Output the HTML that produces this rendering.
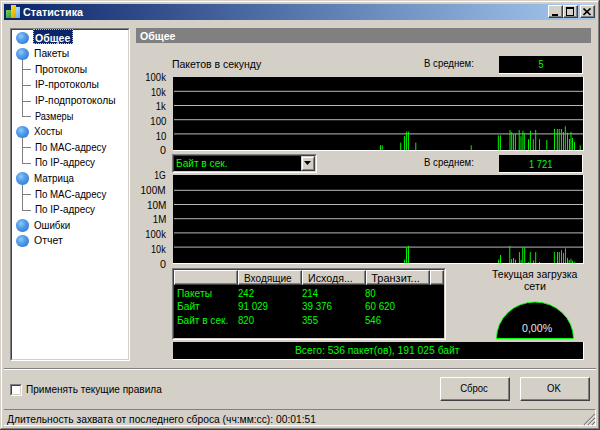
<!DOCTYPE html>
<html><head><meta charset="utf-8"><style>
html,body{margin:0;padding:0;width:600px;height:430px;overflow:hidden;background:#d4d0c8;}
body{position:relative;font-family:"Liberation Sans",sans-serif;font-size:11px;}
div{position:absolute;box-sizing:border-box;}
.t{line-height:12px;white-space:nowrap;}
svg{position:absolute;}
</style></head><body>
<div style="left:1px;top:1px;width:598px;height:1px;background:#fff"></div>
<div style="left:1px;top:1px;width:1px;height:428px;background:#fff"></div>
<div style="left:1px;top:428px;width:598px;height:1px;background:#808080"></div>
<div style="left:598px;top:1px;width:1px;height:428px;background:#808080"></div>
<div style="left:0px;top:429px;width:600px;height:1px;background:#404040"></div>
<div style="left:599px;top:0px;width:1px;height:430px;background:#404040"></div>
<div style="left:4px;top:4px;width:592px;height:16px;background:linear-gradient(to right,#0a246a,#a6caf0)"></div>
<div style="left:6px;top:10px;width:5px;height:8px;background:linear-gradient(135deg,#74d060,#3a9a30)"></div>
<div style="left:11px;top:5.2px;width:5px;height:12.8px;background:linear-gradient(135deg,#ffe020,#e0a000)"></div>
<div style="left:16px;top:7.2px;width:4px;height:10.8px;background:linear-gradient(135deg,#b0e0ff,#60a8e8)"></div>
<div class="t" style="top:5.80px;color:#fff;font-weight:bold;left:22.80px;"><span style="display:inline-block;transform:scale(0.9756,1.000);transform-origin:left 10px;">Статистика</span></div>
<div style="left:548px;top:5px;width:15px;height:13px;background:#d4d0c8;border-top:1px solid #fff;border-left:1px solid #fff;border-right:1px solid #404040;border-bottom:1px solid #404040"></div>
<div style="left:549px;top:6px;width:13px;height:11px;border-right:1px solid #808080;border-bottom:1px solid #808080"></div>
<div style="left:563px;top:5px;width:15px;height:13px;background:#d4d0c8;border-top:1px solid #fff;border-left:1px solid #fff;border-right:1px solid #404040;border-bottom:1px solid #404040"></div>
<div style="left:564px;top:6px;width:13px;height:11px;border-right:1px solid #808080;border-bottom:1px solid #808080"></div>
<div style="left:580px;top:5px;width:15px;height:13px;background:#d4d0c8;border-top:1px solid #fff;border-left:1px solid #fff;border-right:1px solid #404040;border-bottom:1px solid #404040"></div>
<div style="left:581px;top:6px;width:13px;height:11px;border-right:1px solid #808080;border-bottom:1px solid #808080"></div>
<div style="left:552px;top:14px;width:6px;height:2px;background:#000"></div>
<div style="left:566px;top:7px;width:8px;height:9px;border:1px solid #000;border-top-width:2px"></div>
<svg style="left:583px;top:8px" width="9" height="8" viewBox="0 0 9 8"><path d="M0.5 0.5L7.5 7M7.5 0.5L0.5 7" stroke="#000" stroke-width="1.6" fill="none"/></svg>
<div style="left:10px;top:28px;width:120px;height:333px;background:#fff;border-top:1px solid #808080;border-left:1px solid #808080;border-right:1px solid #fff;border-bottom:1px solid #fff"></div>
<div style="left:11px;top:29px;width:118px;height:331px;border-top:1px solid #404040;border-left:1px solid #404040;border-right:1px solid #d4d0c8;border-bottom:1px solid #d4d0c8"></div>
<div style="left:22px;top:60px;width:1px;height:57px;background:#808080"></div>
<div style="left:22px;top:69px;width:9px;height:1px;background:#808080"></div>
<div style="left:22px;top:85px;width:9px;height:1px;background:#808080"></div>
<div style="left:22px;top:101px;width:9px;height:1px;background:#808080"></div>
<div style="left:22px;top:116px;width:9px;height:1px;background:#808080"></div>
<div style="left:22px;top:138px;width:1px;height:26px;background:#808080"></div>
<div style="left:22px;top:147px;width:9px;height:1px;background:#808080"></div>
<div style="left:22px;top:163px;width:9px;height:1px;background:#808080"></div>
<div style="left:22px;top:185px;width:1px;height:26px;background:#808080"></div>
<div style="left:22px;top:194px;width:9px;height:1px;background:#808080"></div>
<div style="left:22px;top:210px;width:9px;height:1px;background:#808080"></div>
<div style="left:16.3px;top:32.00px;width:12.6px;height:12.4px;border-radius:50%;background:radial-gradient(circle at 38% 35%,#8ccaff 0%,#55a0ea 35%,#3c84d8 70%,#2a66bc 100%)"></div>
<div style="left:33px;top:29px;width:40px;height:15px;background:#0a246a;outline:1px dotted #d4c080;outline-offset:-1px"></div>
<div class="t" style="top:31.50px;color:#fff;font-weight:bold;left:34.70px;"><span style="display:inline-block;transform:scale(0.9573,1.000);transform-origin:left 10px;">Общее</span></div>
<div style="left:16.3px;top:47.60px;width:12.6px;height:12.4px;border-radius:50%;background:radial-gradient(circle at 38% 35%,#8ccaff 0%,#55a0ea 35%,#3c84d8 70%,#2a66bc 100%)"></div>
<div class="t" style="top:47.10px;color:#000;left:33.60px;"><span style="display:inline-block;transform:scale(0.9344,1.000);transform-origin:left 10px;">Пакеты</span></div>
<div class="t" style="top:62.70px;color:#000;left:34.80px;"><span style="display:inline-block;transform:scale(0.9308,1.000);transform-origin:left 10px;">Протоколы</span></div>
<div class="t" style="top:78.30px;color:#000;left:34.80px;"><span style="display:inline-block;transform:scale(0.9357,1.000);transform-origin:left 10px;">IP-протоколы</span></div>
<div class="t" style="top:93.90px;color:#000;left:34.80px;"><span style="display:inline-block;transform:scale(0.9313,1.000);transform-origin:left 10px;">IP-подпротоколы</span></div>
<div class="t" style="top:109.50px;color:#000;left:34.80px;"><span style="display:inline-block;transform:scale(0.8377,1.000);transform-origin:left 10px;">Размеры</span></div>
<div style="left:16.3px;top:125.60px;width:12.6px;height:12.4px;border-radius:50%;background:radial-gradient(circle at 38% 35%,#8ccaff 0%,#55a0ea 35%,#3c84d8 70%,#2a66bc 100%)"></div>
<div class="t" style="top:125.10px;color:#000;left:33.60px;"><span style="display:inline-block;transform:scale(0.8936,1.000);transform-origin:left 10px;">Хосты</span></div>
<div class="t" style="top:140.70px;color:#000;left:34.80px;"><span style="display:inline-block;transform:scale(0.8806,1.000);transform-origin:left 10px;">По MAC-адресу</span></div>
<div class="t" style="top:156.30px;color:#000;left:34.80px;"><span style="display:inline-block;transform:scale(0.8966,1.000);transform-origin:left 10px;">По IP-адресу</span></div>
<div style="left:16.3px;top:172.40px;width:12.6px;height:12.4px;border-radius:50%;background:radial-gradient(circle at 38% 35%,#8ccaff 0%,#55a0ea 35%,#3c84d8 70%,#2a66bc 100%)"></div>
<div class="t" style="top:171.90px;color:#000;left:33.60px;"><span style="display:inline-block;transform:scale(0.8911,1.000);transform-origin:left 10px;">Матрица</span></div>
<div class="t" style="top:187.50px;color:#000;left:34.80px;"><span style="display:inline-block;transform:scale(0.8806,1.000);transform-origin:left 10px;">По MAC-адресу</span></div>
<div class="t" style="top:203.10px;color:#000;left:34.80px;"><span style="display:inline-block;transform:scale(0.8966,1.000);transform-origin:left 10px;">По IP-адресу</span></div>
<div style="left:16.3px;top:219.20px;width:12.6px;height:12.4px;border-radius:50%;background:radial-gradient(circle at 38% 35%,#8ccaff 0%,#55a0ea 35%,#3c84d8 70%,#2a66bc 100%)"></div>
<div class="t" style="top:218.70px;color:#000;left:33.60px;"><span style="display:inline-block;transform:scale(0.8873,1.000);transform-origin:left 10px;">Ошибки</span></div>
<div style="left:16.3px;top:234.80px;width:12.6px;height:12.4px;border-radius:50%;background:radial-gradient(circle at 38% 35%,#8ccaff 0%,#55a0ea 35%,#3c84d8 70%,#2a66bc 100%)"></div>
<div class="t" style="top:234.30px;color:#000;left:33.60px;"><span style="display:inline-block;transform:scale(0.9560,1.000);transform-origin:left 10px;">Отчет</span></div>
<div style="left:136px;top:28px;width:455px;height:15px;background:#808080"></div>
<div class="t" style="top:29.50px;color:#fff;font-weight:bold;left:139.50px;"><span style="display:inline-block;transform:scale(0.9627,1.000);transform-origin:left 10px;">Общее</span></div>
<div class="t" style="top:57.60px;color:#000;left:172.40px;"><span style="display:inline-block;transform:scale(0.9531,1.000);transform-origin:left 10px;">Пакетов в секунду</span></div>
<div class="t" style="top:57.20px;color:#000;left:424.30px;"><span style="display:inline-block;transform:scale(0.8735,1.000);transform-origin:left 10px;">В среднем:</span></div>
<div style="left:499px;top:56px;width:84px;height:18px;background:#000;border-right:1px solid #fff;border-bottom:1px solid #fff"></div>
<div class="t" style="top:58.20px;color:#00ff00;left:240.75px;width:600px;text-align:center;"><span style="display:inline-block;transform:scale(0.8163,1.000);transform-origin:center 10px;">5</span></div>
<div style="left:173px;top:77px;width:411px;height:74px;background:#000;border-right:1px solid #fff;border-bottom:1px solid #fff"></div>
<svg style="left:0;top:0" width="600" height="430" viewBox="0 0 600 430"><rect x="174" y="90.80" width="409" height="1" fill="#b8b8b8"/><rect x="174" y="105.00" width="409" height="1" fill="#b8b8b8"/><rect x="174" y="119.20" width="409" height="1" fill="#b8b8b8"/><rect x="174" y="133.40" width="409" height="1" fill="#b8b8b8"/><rect x="380.03" y="145.30" width="0.94" height="4.70" fill="#00ff00"/><rect x="381.73" y="145.30" width="0.94" height="4.70" fill="#00ff00"/><rect x="400.23" y="142.60" width="0.94" height="7.40" fill="#00ff00"/><rect x="403.93" y="136.00" width="0.94" height="14.00" fill="#00ff00"/><rect x="405.93" y="131.60" width="0.94" height="18.40" fill="#00ff00"/><rect x="407.93" y="131.60" width="0.94" height="18.40" fill="#00ff00"/><rect x="415.33" y="142.60" width="0.94" height="7.40" fill="#00ff00"/><rect x="470.73" y="145.30" width="0.94" height="4.70" fill="#00ff00"/><rect x="497.83" y="135.40" width="0.94" height="14.60" fill="#00ff00"/><rect x="499.93" y="135.40" width="0.94" height="14.60" fill="#00ff00"/><rect x="509.53" y="130.00" width="0.94" height="20.00" fill="#00ff00"/><rect x="511.23" y="132.00" width="0.94" height="18.00" fill="#00ff00"/><rect x="513.03" y="134.20" width="0.94" height="15.80" fill="#00ff00"/><rect x="514.93" y="133.75" width="0.94" height="16.25" fill="#00ff00"/><rect x="518.73" y="130.00" width="0.94" height="20.00" fill="#00ff00"/><rect x="520.53" y="136.25" width="0.94" height="13.75" fill="#00ff00"/><rect x="522.43" y="130.80" width="0.94" height="19.20" fill="#00ff00"/><rect x="523.83" y="132.90" width="0.94" height="17.10" fill="#00ff00"/><rect x="528.03" y="139.20" width="0.94" height="10.80" fill="#00ff00"/><rect x="529.93" y="130.80" width="0.94" height="19.20" fill="#00ff00"/><rect x="532.83" y="139.20" width="0.94" height="10.80" fill="#00ff00"/><rect x="535.23" y="130.00" width="0.94" height="20.00" fill="#00ff00"/><rect x="539.03" y="139.20" width="0.94" height="10.80" fill="#00ff00"/><rect x="546.33" y="140.00" width="0.94" height="10.00" fill="#00ff00"/><rect x="554.03" y="129.00" width="0.94" height="21.00" fill="#00ff00"/><rect x="556.83" y="129.00" width="0.94" height="21.00" fill="#00ff00"/><rect x="558.73" y="129.00" width="0.94" height="21.00" fill="#00ff00"/><rect x="560.93" y="129.00" width="0.94" height="21.00" fill="#00ff00"/><rect x="563.03" y="132.00" width="0.94" height="18.00" fill="#00ff00"/><rect x="564.83" y="126.25" width="0.94" height="23.75" fill="#00ff00"/><rect x="567.03" y="132.70" width="0.94" height="17.30" fill="#00ff00"/><rect x="569.03" y="139.00" width="0.94" height="11.00" fill="#00ff00"/><rect x="570.53" y="131.70" width="0.94" height="18.30" fill="#00ff00"/><rect x="572.03" y="138.00" width="0.94" height="12.00" fill="#00ff00"/><rect x="574.03" y="142.00" width="0.94" height="8.00" fill="#00ff00"/><rect x="579.73" y="145.40" width="0.94" height="4.60" fill="#00ff00"/></svg>
<div class="t" style="top:71.00px;color:#000;left:-234.00px;width:400px;text-align:right;"><span style="display:inline-block;transform:scale(0.8592,1.000);transform-origin:right 10px;">100k</span></div>
<div class="t" style="top:85.60px;color:#000;left:-234.00px;width:400px;text-align:right;"><span style="display:inline-block;transform:scale(0.8282,1.000);transform-origin:right 10px;">10k</span></div>
<div class="t" style="top:99.80px;color:#000;left:-234.00px;width:400px;text-align:right;"><span style="display:inline-block;transform:scale(0.8602,1.000);transform-origin:right 10px;">1k</span></div>
<div class="t" style="top:114.90px;color:#000;left:-234.00px;width:400px;text-align:right;"><span style="display:inline-block;transform:scale(0.8715,1.000);transform-origin:right 10px;">100</span></div>
<div class="t" style="top:129.50px;color:#000;left:-234.00px;width:400px;text-align:right;"><span style="display:inline-block;transform:scale(0.8653,1.000);transform-origin:right 10px;">10</span></div>
<div class="t" style="top:144.20px;color:#000;left:-234.00px;width:400px;text-align:right;"><span style="display:inline-block;transform:scale(0.9796,1.000);transform-origin:right 10px;">0</span></div>
<div style="left:172px;top:154px;width:145px;height:19px;background:#000;border-top:1px solid #808080;border-left:1px solid #808080;border-right:1px solid #fff;border-bottom:1px solid #fff"></div>
<div style="left:173px;top:155px;width:143px;height:17px;border-top:1px solid #404040;border-left:1px solid #404040;border-right:1px solid #d4d0c8;border-bottom:1px solid #d4d0c8"></div>
<div style="left:301px;top:156px;width:14px;height:15px;background:#d4d0c8;border-top:1px solid #d4d0c8;border-left:1px solid #d4d0c8;border-right:1px solid #404040;border-bottom:1px solid #404040"></div>
<div style="left:302px;top:157px;width:12px;height:13px;border-top:1px solid #fff;border-left:1px solid #fff;border-right:1px solid #808080;border-bottom:1px solid #808080"></div>
<svg style="left:304px;top:161px" width="7" height="4" viewBox="0 0 7 4"><path d="M0 0H7L3.5 4Z" fill="#000"/></svg>
<div class="t" style="top:157.30px;color:#00ff00;left:175.60px;"><span style="display:inline-block;transform:scale(0.9202,1.000);transform-origin:left 10px;">Байт в сек.</span></div>
<div class="t" style="top:155.50px;color:#000;left:424.30px;"><span style="display:inline-block;transform:scale(0.8735,1.000);transform-origin:left 10px;">В среднем:</span></div>
<div style="left:499px;top:155px;width:84px;height:18px;background:#000;border-right:1px solid #fff;border-bottom:1px solid #fff"></div>
<div class="t" style="top:157.75px;color:#00ff00;left:240.40px;width:600px;text-align:center;"><span style="display:inline-block;transform:scale(0.8499,1.000);transform-origin:center 10px;">1 721</span></div>
<div style="left:173px;top:175px;width:411px;height:89px;background:#000;border-right:1px solid #fff;border-bottom:1px solid #fff"></div>
<svg style="left:0;top:0" width="600" height="430" viewBox="0 0 600 430"><rect x="174" y="189.80" width="409" height="1" fill="#b8b8b8"/><rect x="174" y="204.00" width="409" height="1" fill="#b8b8b8"/><rect x="174" y="218.20" width="409" height="1" fill="#b8b8b8"/><rect x="174" y="232.40" width="409" height="1" fill="#b8b8b8"/><rect x="174" y="246.60" width="409" height="1" fill="#b8b8b8"/><rect x="404.13" y="259.60" width="0.94" height="3.40" fill="#00ff00"/><rect x="406.03" y="247.10" width="0.94" height="15.90" fill="#00ff00"/><rect x="408.03" y="245.80" width="0.94" height="17.20" fill="#00ff00"/><rect x="498.13" y="259.60" width="0.94" height="3.40" fill="#00ff00"/><rect x="500.03" y="255.00" width="0.94" height="8.00" fill="#00ff00"/><rect x="509.33" y="245.80" width="0.94" height="17.20" fill="#00ff00"/><rect x="511.03" y="259.20" width="0.94" height="3.80" fill="#00ff00"/><rect x="513.13" y="257.90" width="0.94" height="5.10" fill="#00ff00"/><rect x="515.03" y="259.60" width="0.94" height="3.40" fill="#00ff00"/><rect x="518.93" y="252.10" width="0.94" height="10.90" fill="#00ff00"/><rect x="520.63" y="260.00" width="0.94" height="3.00" fill="#00ff00"/><rect x="522.28" y="247.10" width="0.94" height="15.90" fill="#00ff00"/><rect x="524.23" y="247.50" width="0.94" height="15.50" fill="#00ff00"/><rect x="527.83" y="262.00" width="0.94" height="1.00" fill="#00ff00"/><rect x="529.78" y="252.10" width="0.94" height="10.90" fill="#00ff00"/><rect x="533.13" y="260.40" width="0.94" height="2.60" fill="#00ff00"/><rect x="535.23" y="252.10" width="0.94" height="10.90" fill="#00ff00"/><rect x="538.93" y="262.00" width="0.94" height="1.00" fill="#00ff00"/><rect x="553.83" y="252.10" width="0.94" height="10.90" fill="#00ff00"/><rect x="557.03" y="252.00" width="0.94" height="11.00" fill="#00ff00"/><rect x="558.83" y="252.00" width="0.94" height="11.00" fill="#00ff00"/><rect x="561.03" y="250.20" width="0.94" height="12.80" fill="#00ff00"/><rect x="563.03" y="253.00" width="0.94" height="10.00" fill="#00ff00"/><rect x="564.93" y="248.30" width="0.94" height="14.70" fill="#00ff00"/><rect x="567.03" y="257.90" width="0.94" height="5.10" fill="#00ff00"/><rect x="568.73" y="260.00" width="0.94" height="3.00" fill="#00ff00"/><rect x="570.53" y="258.75" width="0.94" height="4.25" fill="#00ff00"/><rect x="572.03" y="260.80" width="0.94" height="2.20" fill="#00ff00"/><rect x="573.83" y="262.00" width="0.94" height="1.00" fill="#00ff00"/></svg>
<div class="t" style="top:169.40px;color:#000;left:-234.00px;width:400px;text-align:right;"><span style="display:inline-block;transform:scale(0.7830,1.000);transform-origin:right 10px;">1G</span></div>
<div class="t" style="top:184.10px;color:#000;left:-234.00px;width:400px;text-align:right;"><span style="display:inline-block;transform:scale(0.9081,1.000);transform-origin:right 10px;">100M</span></div>
<div class="t" style="top:198.70px;color:#000;left:-234.00px;width:400px;text-align:right;"><span style="display:inline-block;transform:scale(0.9109,1.000);transform-origin:right 10px;">10M</span></div>
<div class="t" style="top:213.20px;color:#000;left:-234.00px;width:400px;text-align:right;"><span style="display:inline-block;transform:scale(0.8834,1.000);transform-origin:right 10px;">1M</span></div>
<div class="t" style="top:228.20px;color:#000;left:-234.00px;width:400px;text-align:right;"><span style="display:inline-block;transform:scale(0.8592,1.000);transform-origin:right 10px;">100k</span></div>
<div class="t" style="top:242.70px;color:#000;left:-234.00px;width:400px;text-align:right;"><span style="display:inline-block;transform:scale(0.8282,1.000);transform-origin:right 10px;">10k</span></div>
<div class="t" style="top:257.80px;color:#000;left:-234.00px;width:400px;text-align:right;"><span style="display:inline-block;transform:scale(0.9796,1.000);transform-origin:right 10px;">0</span></div>
<div style="left:172px;top:268px;width:274px;height:72px;background:#000;border-top:1px solid #808080;border-left:1px solid #808080;border-right:1px solid #fff;border-bottom:1px solid #fff"></div>
<div style="left:173px;top:269px;width:272px;height:70px;border-top:1px solid #404040;border-left:1px solid #404040;border-right:1px solid #d4d0c8;border-bottom:1px solid #d4d0c8"></div>
<div style="left:174px;top:270px;width:64px;height:15px;background:#d4d0c8;border-top:1px solid #fff;border-left:1px solid #fff;border-right:1px solid #404040;border-bottom:1px solid #404040"></div>
<div style="left:175px;top:271px;width:62px;height:13px;border-right:1px solid #808080;border-bottom:1px solid #808080"></div>
<div style="left:238px;top:270px;width:64px;height:15px;background:#d4d0c8;border-top:1px solid #fff;border-left:1px solid #fff;border-right:1px solid #404040;border-bottom:1px solid #404040"></div>
<div style="left:239px;top:271px;width:62px;height:13px;border-right:1px solid #808080;border-bottom:1px solid #808080"></div>
<div style="left:302px;top:270px;width:64px;height:15px;background:#d4d0c8;border-top:1px solid #fff;border-left:1px solid #fff;border-right:1px solid #404040;border-bottom:1px solid #404040"></div>
<div style="left:303px;top:271px;width:62px;height:13px;border-right:1px solid #808080;border-bottom:1px solid #808080"></div>
<div style="left:366px;top:270px;width:64px;height:15px;background:#d4d0c8;border-top:1px solid #fff;border-left:1px solid #fff;border-right:1px solid #404040;border-bottom:1px solid #404040"></div>
<div style="left:367px;top:271px;width:62px;height:13px;border-right:1px solid #808080;border-bottom:1px solid #808080"></div>
<div style="left:430px;top:270px;width:14px;height:15px;background:#d4d0c8;border-top:1px solid #fff;border-left:1px solid #fff;border-right:1px solid #404040;border-bottom:1px solid #404040"></div>
<div style="left:431px;top:271px;width:12px;height:13px;border-right:1px solid #808080;border-bottom:1px solid #808080"></div>
<div class="t" style="top:272.00px;color:#000;left:244.30px;"><span style="display:inline-block;transform:scale(0.9146,1.000);transform-origin:left 10px;">Входящие</span></div>
<div class="t" style="top:272.00px;color:#000;left:308.00px;"><span style="display:inline-block;transform:scale(0.9696,1.000);transform-origin:left 10px;">Исходя...</span></div>
<div class="t" style="top:272.00px;color:#000;left:371.20px;"><span style="display:inline-block;">Транзит...</span></div>
<div class="t" style="top:286.50px;color:#00ff00;left:177.20px;"><span style="display:inline-block;transform:scale(0.9291,1.000);transform-origin:left 10px;">Пакеты</span></div>
<div class="t" style="top:286.50px;color:#00ff00;left:238.30px;"><span style="display:inline-block;transform:scale(0.8715,1.000);transform-origin:left 10px;">242</span></div>
<div class="t" style="top:286.50px;color:#00ff00;left:302.00px;"><span style="display:inline-block;transform:scale(0.8715,1.000);transform-origin:left 10px;">214</span></div>
<div class="t" style="top:286.50px;color:#00ff00;left:365.00px;"><span style="display:inline-block;transform:scale(0.8735,1.000);transform-origin:left 10px;">80</span></div>
<div class="t" style="top:299.80px;color:#00ff00;left:177.20px;"><span style="display:inline-block;transform:scale(0.9294,1.000);transform-origin:left 10px;">Байт</span></div>
<div class="t" style="top:299.80px;color:#00ff00;left:238.30px;"><span style="display:inline-block;transform:scale(0.8914,1.000);transform-origin:left 10px;">91 029</span></div>
<div class="t" style="top:299.80px;color:#00ff00;left:302.00px;"><span style="display:inline-block;transform:scale(0.8914,1.000);transform-origin:left 10px;">39 376</span></div>
<div class="t" style="top:299.80px;color:#00ff00;left:365.00px;"><span style="display:inline-block;transform:scale(0.8914,1.000);transform-origin:left 10px;">60 620</span></div>
<div class="t" style="top:313.70px;color:#00ff00;left:177.20px;"><span style="display:inline-block;transform:scale(0.9148,1.000);transform-origin:left 10px;">Байт в сек.</span></div>
<div class="t" style="top:313.70px;color:#00ff00;left:238.30px;"><span style="display:inline-block;transform:scale(0.8715,1.000);transform-origin:left 10px;">820</span></div>
<div class="t" style="top:313.70px;color:#00ff00;left:302.00px;"><span style="display:inline-block;transform:scale(0.8715,1.000);transform-origin:left 10px;">355</span></div>
<div class="t" style="top:313.70px;color:#00ff00;left:365.00px;"><span style="display:inline-block;transform:scale(0.8715,1.000);transform-origin:left 10px;">546</span></div>
<div class="t" style="top:268.40px;color:#000;left:492.40px;"><span style="display:inline-block;transform:scale(0.9519,1.000);transform-origin:left 10px;">Текущая загрузка</span></div>
<div class="t" style="top:280.00px;color:#000;left:524.40px;"><span style="display:inline-block;transform:scale(0.9760,1.000);transform-origin:left 10px;">сети</span></div>
<svg style="left:490px;top:296px" width="90" height="46" viewBox="490 296 90 46"><path d="M496.5 338.5 A38.5 36.5 0 0 1 573.5 338.5 Z" fill="#000" stroke="#00ff00" stroke-width="1"/></svg>
<div class="t" style="top:321.70px;color:#e8e8e8;left:522.40px;"><span style="display:inline-block;transform:scale(0.9646,1.000);transform-origin:left 10px;">0,00%</span></div>
<div style="left:173px;top:342px;width:411px;height:18px;background:#000;border-right:1px solid #fff;border-bottom:1px solid #fff"></div>
<div class="t" style="top:344.20px;color:#00ff00;left:294.50px;"><span style="display:inline-block;transform:scale(0.9361,1.000);transform-origin:left 10px;">Всего: 536 пакет(ов), 191 025 байт</span></div>
<div style="left:4px;top:368px;width:592px;height:1px;background:#808080"></div>
<div style="left:4px;top:369px;width:592px;height:1px;background:#fff"></div>
<div style="left:10px;top:384px;width:12px;height:12px;background:#fff;border-top:1px solid #808080;border-left:1px solid #808080;border-right:1px solid #fff;border-bottom:1px solid #fff"></div>
<div style="left:11px;top:385px;width:10px;height:10px;border-top:1px solid #404040;border-left:1px solid #404040;border-right:1px solid #d4d0c8;border-bottom:1px solid #d4d0c8"></div>
<div class="t" style="top:383.00px;color:#000;left:26.40px;"><span style="display:inline-block;transform:scale(0.9159,1.000);transform-origin:left 10px;">Применять текущие правила</span></div>
<div style="left:440px;top:377px;width:70px;height:24px;background:#d4d0c8;border-top:1px solid #fff;border-left:1px solid #fff;border-right:1px solid #404040;border-bottom:1px solid #404040"></div>
<div style="left:441px;top:378px;width:68px;height:22px;border-right:1px solid #808080;border-bottom:1px solid #808080"></div>
<div class="t" style="top:382.40px;color:#000;left:173.90px;width:600px;text-align:center;"><span style="display:inline-block;transform:scale(0.8660,1.000);transform-origin:center 10px;">Сброс</span></div>
<div style="left:520px;top:377px;width:70px;height:24px;background:#d4d0c8;border-top:1px solid #fff;border-left:1px solid #fff;border-right:1px solid #404040;border-bottom:1px solid #404040"></div>
<div style="left:521px;top:378px;width:68px;height:22px;border-right:1px solid #808080;border-bottom:1px solid #808080"></div>
<div class="t" style="top:382.40px;color:#000;left:254.40px;width:600px;text-align:center;"><span style="display:inline-block;transform:scale(0.8676,1.000);transform-origin:center 10px;">OK</span></div>
<div style="left:4px;top:409px;width:592px;height:17px;border-top:1px solid #808080;border-right:1px solid #fff;border-bottom:1px solid #fff"></div>
<div class="t" style="top:412.50px;color:#000;left:7.00px;"><span style="display:inline-block;transform:scale(0.9342,1.000);transform-origin:left 10px;">Длительность захвата от последнего сброса (чч:мм:сс): 00:01:51</span></div>
<svg style="left:582px;top:412px" width="14" height="14" viewBox="0 0 14 14"><path d="M13 2L2 13M13 6L6 13M13 10L10 13" stroke="#808080" stroke-width="1.3"/><path d="M13 3.3L3.3 13M13 7.3L7.3 13M13 11.3L11.3 13" stroke="#fff" stroke-width="0.8"/></svg>
</body></html>
